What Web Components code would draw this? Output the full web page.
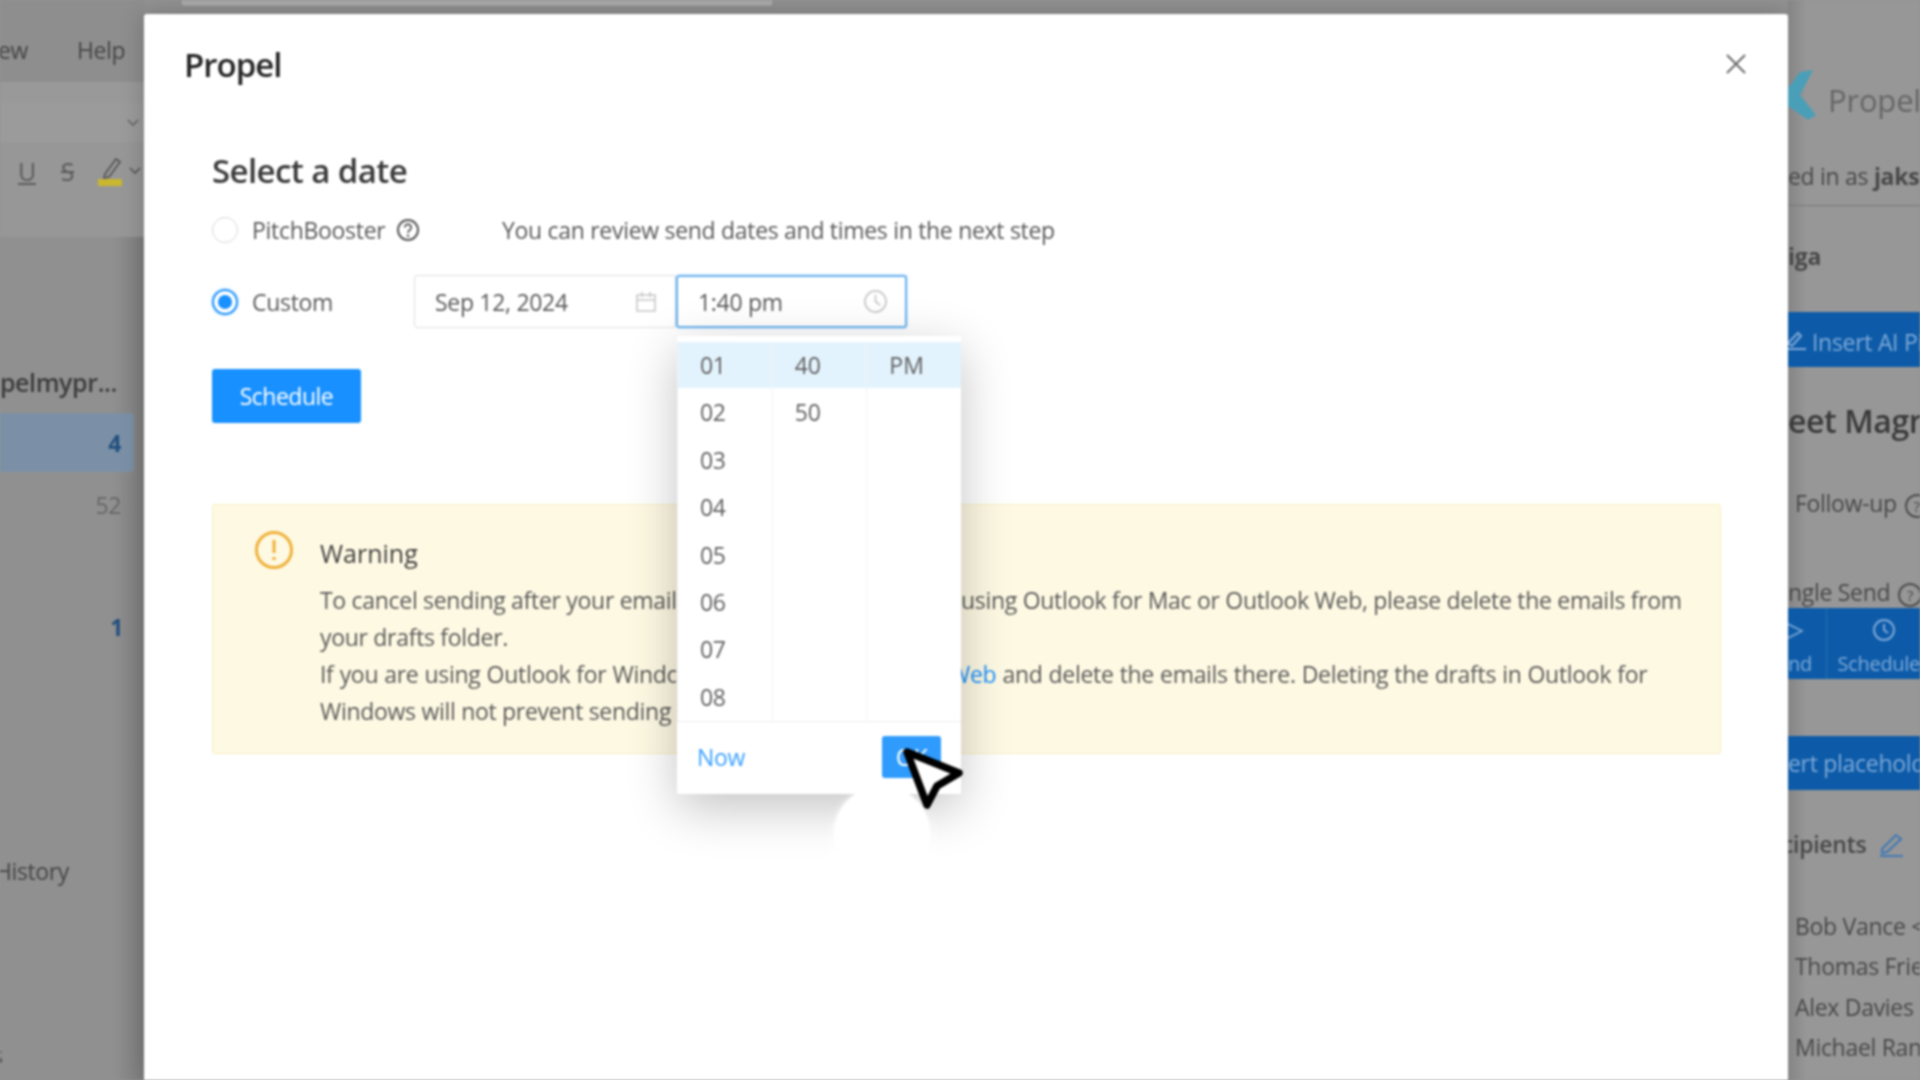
<!DOCTYPE html>
<html lang="en">
<head>
<meta charset="utf-8">
<title>Propel</title>
<style>
    html, body { margin: 0; height: 100%; overflow: hidden; background: #929292; }
    body { font-family: "Open Sans", "Liberation Sans", sans-serif; }
</style>
</head>
<body>
<pf-shell>
    <pf-left-pane slot="left"></pf-left-pane>
    <pf-modal>
        <pf-date-form></pf-date-form>
        <pf-warning></pf-warning>
    </pf-modal>
    <pf-right-pane slot="right"></pf-right-pane>
</pf-shell>
<script>
const TEXT = `font-family: "Open Sans", "Liberation Sans", sans-serif; font-size: 23px; letter-spacing: -.3px;`;

class PfShell extends HTMLElement {
    constructor() {
        super();
        this.attachShadow({ mode: 'open' });
        this.shadowRoot.innerHTML = `
            <style>
                :host {
                    display: grid;
                    grid-template-columns: 144px 1644px 132px;
                    width: 1920px;
                    height: 1080px;
                    position: relative;
                    overflow: hidden;
                    filter: blur(.8px);
                }
                .card {
                    position: absolute;
                    left: 180px;
                    top: -10px;
                    width: 592px;
                    height: 15px;
                    background: #a3a3a3;
                    border: 1px solid #7e7e7e;
                    border-radius: 4px;
                }
                .hole {
                    position: absolute;
                    z-index: 4;
                    left: 834px;
                    top: 786px;
                    width: 96px;
                    height: 96px;
                    border-radius: 50%;
                    background: #fff;
                    box-shadow: 0 0 6px #fff;
                }
                svg { position: absolute; z-index: 5; left: 896px; top: 740px; }
            </style>
            <slot name="left"></slot>
            <slot></slot>
            <slot name="right"></slot>
            <div class="card"></div>
            <div class="hole"></div>
            <svg width="76" height="76" viewBox="0 0 76 76">
                <path d="M11 12 L63 33 L41 46 L31 65 Z" fill="#fff" stroke="#000" stroke-width="7.500" stroke-linejoin="round"/>
            </svg>
        `;
    }
}

class PfLeftPane extends HTMLElement {
    constructor() {
        super();
        this.attachShadow({ mode: 'open' });
        this.shadowRoot.innerHTML = `
            <style>
                :host {
                    display: flex;
                    flex-direction: column;
                    height: 1080px;
                    overflow: hidden;
                    background: linear-gradient(90deg, #909090 78%, #7f7f7f 100%);
                    color: #454545;
                    filter: blur(.6px);
                    font-family: "Open Sans", sans-serif;
                    font-size: 23px;
                    letter-spacing: -.4px;
                }
                .menu { height: 82px; display: flex; align-items: flex-end; padding: 0 0 16px 0; box-sizing: border-box; gap: 49px; background: #8e8e8e; white-space: nowrap; }
                .menu span { line-height: 32px; }
                .menu span:first-child { margin-left: -2px; }
                .strip { height: 21px; background: #999; }
                .select { height: 39px; background: #9b9b9b; display: flex; justify-content: flex-end; align-items: center; padding-right: 4px; }
                .tools { height: 95px; background: #979797; display: flex; align-items: flex-start; padding: 14px 0 0 18px; box-sizing: border-box; gap: 25px; }
                .tools span { font-size: 25px; line-height: 30px; color: #5b5b5b; }
                .u { text-decoration: underline; }
                .s { text-decoration: line-through; }
                .hl { display: flex; gap: 4px; align-items: center; height: 30px; margin-left: -3px; }
                .name { margin-top: 129px; height: 32px; line-height: 32px; padding-right: 27px; text-align: right; font-weight: 600; font-size: 25px; white-space: nowrap; color: #3d3d3d; display: flex; justify-content: flex-end; }
                .row { display: flex; justify-content: flex-end; align-items: center; padding-right: 23px; height: 59px; }
                .selected { margin: 15px 10px 0 0; padding-right: 13px; background: #7b90a6; border-radius: 0 4px 4px 0; }
                .num { font-weight: 700; color: #234f7e; }
                .muted { color: #666; }
                .history { height: 32px; line-height: 32px; white-space: nowrap; }
                .tail { height: 32px; line-height: 32px; }
            </style>
            <div class="menu"><span>ew</span><span>Help</span></div>
            <div class="strip"></div>
            <div class="select">
                <svg width="14" height="10" viewBox="0 0 14 10"><path d="M2 2l5 5 5-5" fill="none" stroke="#666" stroke-width="1.6"/></svg>
            </div>
            <div class="tools">
                <span class="u">U</span><span class="s">S</span>
                <div class="hl">
                    <svg width="28" height="32" viewBox="0 0 28 32">
                        <path d="M9 19 L20 4 L24 7 L13 22 L8 23 Z" fill="none" stroke="#555" stroke-width="1.7"/>
                        <rect x="2" y="24" width="24" height="7" fill="#c9b72e"/>
                    </svg>
                    <svg width="14" height="10" viewBox="0 0 14 10"><path d="M2 2l5 5 5-5" fill="none" stroke="#555" stroke-width="1.6"/></svg>
                </div>
            </div>
            <div class="name">pelmypr...</div>
            <div class="row selected"><span class="num">4</span></div>
            <div class="row muted" style="margin-top:3px"><span>52</span></div>
            <div class="row num" style="margin-top:63px;padding-right:21px"><span>1</span></div>
            <div class="history" style="margin-top:199px;margin-left:-5px">History</div>
            <div class="tail" style="margin-top:152px;margin-left:-8px">s</div>
        `;
    }
}

class PfRightPane extends HTMLElement {
    constructor() {
        super();
        this.attachShadow({ mode: 'open' });
        this.shadowRoot.innerHTML = `
            <style>
                :host {
                    display: flex;
                    flex-direction: column;
                    height: 1080px;
                    overflow: hidden;
                    background: linear-gradient(90deg, #858585 0, #979797 14%);
                    color: #484848;
                    filter: blur(.6px);
                    font-family: "Open Sans", sans-serif;
                    font-size: 23px;
                    letter-spacing: -.3px;
                    white-space: nowrap;
                }
                .logo { margin-top: 70px; height: 48px; display: flex; align-items: flex-start; gap: 12px; color: #666; font-size: 31px; letter-spacing: -.2px; }
                .logo span { line-height: 48px; margin-top: 6px; }
                .line { height: 32px; line-height: 32px; }
                .in { margin-top: 42px; }
                .rule { height: 14px; border-bottom: 1px solid #777; box-sizing: border-box; }
                .blue { background: #0d5ba8; color: #7fa9d8; }
                .insert { margin-top: 40px; height: 55px; display: flex; align-items: center; gap: 4px; }
                .insert span { margin-top: 4px; }
                .title { margin-top: 33px; height: 42px; line-height: 42px; font-size: 32px; font-weight: 600; letter-spacing: -.4px; color: #3a3a3a; }
                .pad { padding-left: 7px; }
                .bar { height: 71px; display: flex; }
                .bar div { display: flex; flex-direction: column; align-items: center; justify-content: flex-end; font-size: 20px; padding-bottom: 2px; box-sizing: border-box; }
                .bar .send { width: 41px; border-right: 1px solid #2a6bb0; align-items: flex-start; }
                .bar .sched { padding-left: 11px; align-items: flex-start; gap: 8px; }
                .holder { margin-top: 57px; height: 54px; display: flex; align-items: center; }
                .names .line { height: 40.4px; line-height: 40.4px; padding-left: 7px; }
                .names { margin-top: 46px; }
                .q { display: inline-block; width: 24px; height: 24px; border: 2px solid #4d4d4d; border-radius: 50%; box-sizing: border-box; text-align: center; line-height: 20px; font-size: 15px; margin-left: 2px; }
                .rec { margin-top: 38px; display: flex; align-items: center; gap: 13px; font-weight: 600; margin-left: -6px; }
            </style>
            <div class="logo">
                <svg width="28" height="50" viewBox="0 0 28 50" style="flex:none">
                    <path d="M0 18 L12 2 L25 0 L12 25 L28 45 L20 50 L0 36 Z" fill="#4a9fb8"/>
                </svg>
                <span>Propel</span>
            </div>
            <div class="line in">ed in as <b>jaks</b></div>
            <div class="rule"></div>
            <div class="line" style="margin-top:34px;font-weight:700">iga</div>
            <div class="blue insert">
                <svg width="20" height="24" viewBox="0 0 20 24" style="flex:none"><path d="M0 15 L10 5 L13 8 L4 18 Z M0 21 H18" fill="none" stroke="#7fa9d8" stroke-width="2"/></svg>
                <span>Insert AI Pi</span>
            </div>
            <div class="title">eet Magn</div>
            <div class="line pad" style="margin-top:45px">Follow-up <span class="q">?</span></div>
            <div class="line" style="margin-top:57px">ngle Send <span class="q">?</span></div>
            <div class="blue bar">
                <div class="send">
                    <svg width="16" height="18" viewBox="0 0 16 18" style="margin-bottom:10px"><path d="M0 2 L14 9 L0 16" fill="none" stroke="#7fa9d8" stroke-width="1.6"/></svg>
                    <span>nd</span>
                </div>
                <div class="sched">
                    <svg width="24" height="24" viewBox="0 0 24 24" style="margin-left:34px"><circle cx="12" cy="12" r="10" fill="none" stroke="#7fa9d8" stroke-width="2"/><path d="M12 6v6l4 3" fill="none" stroke="#7fa9d8" stroke-width="2"/></svg>
                    <span>Schedule</span>
                </div>
            </div>
            <div class="blue holder">ert placehold</div>
            <div class="line rec">cipients
                <svg width="26" height="26" viewBox="0 0 26 26"><path d="M3 18 L17 4 L22 8 L8 21 L3 22 Z M1 25 H24" fill="none" stroke="#3f78b5" stroke-width="2"/></svg>
            </div>
            <div class="names">
                <div class="line">Bob Vance &lt;</div>
                <div class="line">Thomas Frie</div>
                <div class="line">Alex Davies</div>
                <div class="line">Michael Ran</div>
            </div>
        `;
    }
}

class PfModal extends HTMLElement {
    constructor() {
        super();
        this.attachShadow({ mode: 'open' });
        this.shadowRoot.innerHTML = `
            <style>
                :host {
                    display: block;
                    position: relative;
                    margin-top: 14px;
                    height: 1066px;
                    background: #fff;
                    border-radius: 3px 3px 0 0;
                    box-shadow: 0 0 24px rgba(0, 0, 0, .22);
                    color: #262626;
                }
                header {
                    display: flex;
                    justify-content: space-between;
                    align-items: center;
                    height: 100px;
                    padding: 0 40px;
                    font-family: "Open Sans", sans-serif;
                    font-size: 33px;
                    font-weight: 600;
                    letter-spacing: -1px;
                }
                .body { padding: 32px 67px 0 68px; }
            </style>
            <header>
                <span>Propel</span>
                <svg width="24" height="24" viewBox="0 0 24 24"><path d="M3 3l18 18M21 3L3 21" stroke="#6b6b6b" stroke-width="2" fill="none"/></svg>
            </header>
            <div class="body"><slot></slot></div>
        `;
    }
}

class PfDateForm extends HTMLElement {
    constructor() {
        super();
        this.attachShadow({ mode: 'open' });
        this.shadowRoot.innerHTML = `
            <style>
                :host { display: block; ${TEXT} color: #595959; }
                h2 { margin: 0; height: 52px; line-height: 50px; font-size: 33px; font-weight: 600; letter-spacing: -.6px; color: #3a3a3a; }
                .row { display: flex; align-items: center; }
                .one { margin-top: 7px; height: 50px; }
                .two { margin-top: 20px; height: 53px; }
                .radio { width: 26px; height: 26px; border-radius: 50%; border: 1px solid #d9d9d9; box-sizing: border-box; flex: none; margin-right: 14px; }
                .radio.on { border: 2px solid #1890ff; display: flex; align-items: center; justify-content: center; box-shadow: 0 0 3px rgba(24, 144, 255, .4); }
                .radio.on::after { content: ""; width: 14px; height: 14px; border-radius: 50%; background: #1890ff; }
                .one .label { width: 132px; }
                .help { margin-left: 12px; width: 24px; height: 24px; flex: none; margin-right: 82px; }
                .two .label { width: 162px; }
                .field { display: flex; align-items: center; justify-content: space-between; box-sizing: border-box; height: 53px; width: 262px; padding: 0 18px 0 20px; border: 1px solid #e0e0e0; border-radius: 3px; color: #595959; }
                button { display: block; margin-top: 41px; width: 149px; height: 54px; padding: 0; border: 0; border-radius: 3px; background: #1890ff; color: #fff; font: inherit; letter-spacing: -.5px; }
            </style>
            <h2>Select a date</h2>
            <div class="row one">
                <span class="radio"></span>
                <span class="label">PitchBooster</span>
                <svg class="help" viewBox="0 0 24 24"><circle cx="12" cy="12" r="10" fill="none" stroke="#555" stroke-width="2"/><path d="M8.8 9.5a3.2 3.2 0 1 1 5 2.6c-1.2.8-1.8 1.3-1.8 2.7" fill="none" stroke="#555" stroke-width="1.8"/><circle cx="12" cy="17.8" r="1.2" fill="#555"/></svg>
                <span>You can review send dates and times in the next step</span>
            </div>
            <div class="row two">
                <span class="radio on"></span>
                <span class="label">Custom</span>
                <div class="field">
                    <span>Sep 12, 2024</span>
                    <svg width="22" height="22" viewBox="0 0 22 22"><path d="M2 4h18v16H2zM2 9h18M7 1v5M15 1v5" fill="none" stroke="#c8c8c8" stroke-width="1.6"/></svg>
                </div>
                <pf-time-field></pf-time-field>
            </div>
            <button>Schedule</button>
        `;
    }
}

class PfTimeField extends HTMLElement {
    constructor() {
        super();
        this.attachShadow({ mode: 'open' });
        this.shadowRoot.innerHTML = `
            <style>
                :host { display: block; position: relative; width: 231px; height: 53px; }
                .input { display: flex; align-items: center; justify-content: space-between; box-sizing: border-box; height: 53px; padding: 0 17px 0 20px; border: 2px solid #69b1ec; border-radius: 3px; box-shadow: 0 0 3px rgba(24, 144, 255, .35); }
            </style>
            <div class="input">
                <span>1:40 pm</span>
                <svg width="25" height="25" viewBox="0 0 26 26"><circle cx="13" cy="13" r="11" fill="none" stroke="#c8c8c8" stroke-width="1.8"/><path d="M13 6v7l5 4" fill="none" stroke="#c8c8c8" stroke-width="1.8"/></svg>
            </div>
            <pf-time-popup></pf-time-popup>
        `;
    }
}

class PfTimePopup extends HTMLElement {
    constructor() {
        super();
        this.attachShadow({ mode: 'open' });
        const column = (items) => '<div class="col">' + items.map((t) => `<div class="cell">${t}</div>`).join('') + '</div>';
        this.shadowRoot.innerHTML = `
            <style>
                :host {
                    display: flex;
                    flex-direction: column;
                    position: absolute;
                    left: 1px;
                    top: 61px;
                    z-index: 2;
                    width: 284px;
                    height: 458px;
                    box-sizing: border-box;
                    padding-top: 6px;
                    background: #fff;
                    border-radius: 2px;
                    box-shadow: 0 14px 50px rgba(0, 0, 0, .24);
                    color: #5f5f5f;
                }
                .cols { position: relative; display: flex; height: 379px; overflow: hidden; }
                .band { position: absolute; left: 0; right: 0; top: 0; height: 46px; background: #e3f3fd; }
                .col { position: relative; flex: 1; padding-left: 22px; border-left: 1px solid #f2f2f2; }
                .col:first-of-type { border-left: 0; }
                .cell { height: 47.4px; line-height: 47px; }
                .col + .col { letter-spacing: 0; }
                .foot { display: flex; align-items: center; justify-content: space-between; flex: 1; border-top: 1px solid #eee; padding: 0 20px; }
                .now { color: #1890ff; opacity: .85; margin-top: -2px; }
                .ok { width: 59px; height: 42px; margin-top: -3px; border-radius: 3px; background: #2f9bfd; color: #fff; text-align: center; line-height: 42px; }
            </style>
            <div class="cols">
                <div class="band"></div>
                ${column(['01', '02', '03', '04', '05', '06', '07', '08'])}
                ${column(['40', '50'])}
                ${column(['PM'])}
            </div>
            <div class="foot">
                <span class="now">Now</span>
                <span class="ok">OK</span>
            </div>
        `;
    }
}

class PfWarning extends HTMLElement {
    constructor() {
        super();
        this.attachShadow({ mode: 'open' });
        this.shadowRoot.innerHTML = `
            <style>
                :host {
                    display: grid;
                    grid-template-columns: 40px 1fr;
                    column-gap: 26px;
                    box-sizing: border-box;
                    height: 250px;
                    margin-top: 81px;
                    padding: 25px 20px 0 41px;
                    background: #fef9e3;
                    border: 1px solid #f8eec3;
                    border-radius: 3px;
                    ${TEXT}
                    color: #595959;
                }
                svg { display: block; }
                .title { height: 34px; line-height: 34px; margin-top: 6px; color: #3f3f3f; font-size: 25px; letter-spacing: 0; }
                .text { margin-top: 12px; }
                .line { display: grid; height: 37px; line-height: 37px; white-space: nowrap; }
                .cut { grid-template-columns: 356px 1fr; column-gap: 285px; }
                .cut.web { column-gap: 273px; word-spacing: .4px; }
                .cut span:first-child { overflow: hidden; }
                a { color: #1890ff; text-decoration: none; }
            </style>
            <svg width="40" height="40" viewBox="0 0 40 40">
                <circle cx="20" cy="20" r="17.5" fill="none" stroke="#efb13a" stroke-width="3"/>
                <path d="M20 10v13" stroke="#efb13a" stroke-width="3" fill="none"/>
                <circle cx="20" cy="28.500" r="1.800" fill="#efb13a"/>
            </svg>
            <div>
                <div class="title">Warning</div>
                <div class="text">
                    <div class="line cut"><span>To cancel sending after your email</span><span>using Outlook for Mac or Outlook Web, please delete the emails from</span></div>
                    <div class="line">your drafts folder.</div>
                    <div class="line cut web"><span>If you are using Outlook for Windows</span><span><a href="#">Web</a> and delete the emails there. Deleting the drafts in Outlook for</span></div>
                    <div class="line cut"><span>Windows will not prevent sending</span></div>
                </div>
            </div>
        `;
    }
}

customElements.define('pf-shell', PfShell);
customElements.define('pf-left-pane', PfLeftPane);
customElements.define('pf-right-pane', PfRightPane);
customElements.define('pf-modal', PfModal);
customElements.define('pf-date-form', PfDateForm);
customElements.define('pf-time-field', PfTimeField);
customElements.define('pf-time-popup', PfTimePopup);
customElements.define('pf-warning', PfWarning);
</script>
</body>
</html>
